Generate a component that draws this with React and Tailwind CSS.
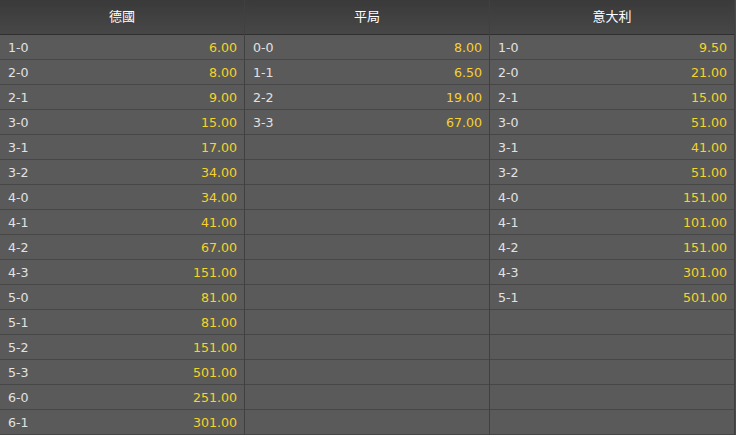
import React from "react";

const cols = [
  {
    title: "德國",
    rows: [
      ["1-0", "6.00"], ["2-0", "8.00"], ["2-1", "9.00"], ["3-0", "15.00"],
      ["3-1", "17.00"], ["3-2", "34.00"], ["4-0", "34.00"], ["4-1", "41.00"],
      ["4-2", "67.00"], ["4-3", "151.00"], ["5-0", "81.00"], ["5-1", "81.00"],
      ["5-2", "151.00"], ["5-3", "501.00"], ["6-0", "251.00"], ["6-1", "301.00"],
    ],
  },
  {
    title: "平局",
    rows: [["0-0", "8.00"], ["1-1", "6.50"], ["2-2", "19.00"], ["3-3", "67.00"]],
  },
  {
    title: "意大利",
    rows: [
      ["1-0", "9.50"], ["2-0", "21.00"], ["2-1", "15.00"], ["3-0", "51.00"],
      ["3-1", "41.00"], ["3-2", "51.00"], ["4-0", "151.00"], ["4-1", "101.00"],
      ["4-2", "151.00"], ["4-3", "301.00"], ["5-1", "501.00"],
    ],
  },
];

export default function App() {
  return (
    <div
      className="w-[736px] h-[435px] overflow-hidden bg-[#575757] flex"
      style={{ fontFamily: '"DejaVu Sans", "Noto Sans CJK TC", sans-serif' }}
    >
      {cols.map((c, ci) => (
        <div key={ci} className="w-[245px] flex flex-col border-r border-[#404040]">
          <div className="h-[35px] shrink-0 flex items-center justify-center text-[13px] text-white bg-gradient-to-b from-[#3a3a3a] to-[#474747] border-b border-[#2f2f2f]">
            {c.title}
          </div>
          {Array.from({ length: 16 }).map((_, ri) => {
            const r = c.rows[ri];
            return (
              <div
                key={ri}
                className="h-[25px] shrink-0 flex items-center justify-between pl-2 pr-[7px] pt-[2px] text-[12.6px] bg-[#5a5a5a] border-b border-[#474747]"
              >
                <span className="text-[#e2e2e2]">{r ? r[0] : ""}</span>
                <span className="text-[#f6d22a]">{r ? r[1] : ""}</span>
              </div>
            );
          })}
        </div>
      ))}
      <div className="w-[1px] bg-[#4a4a4a]" />
    </div>
  );
}
